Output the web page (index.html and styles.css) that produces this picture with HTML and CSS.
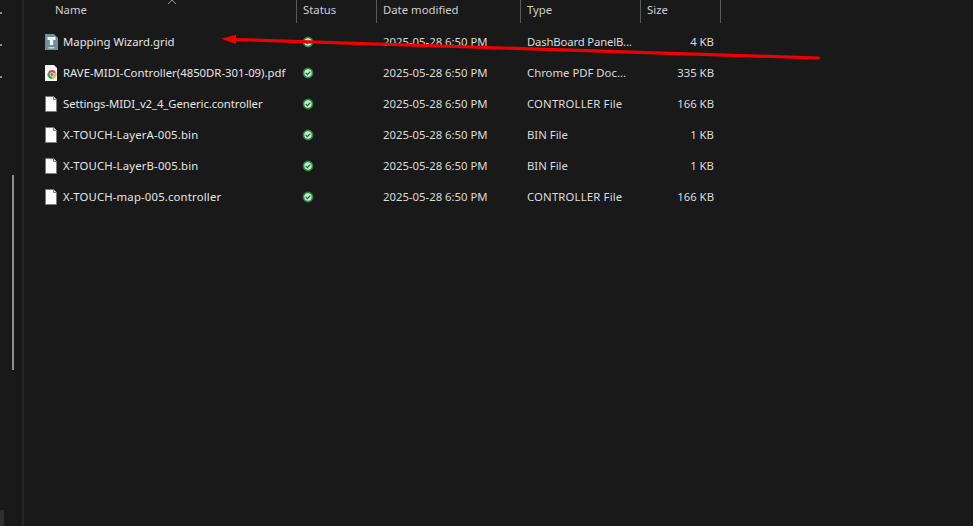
FILE: index.html
```html
<!DOCTYPE html>
<html lang="en">
<head>
<meta charset="utf-8">
<title>Explorer</title>
<link rel="stylesheet" href="styles.css">
</head>
<body>
<div class="window">
  <aside class="nav">
    <i class="tick"></i><i class="tick"></i><i class="tick"></i>
    <div class="thumb"></div>
    <div class="corner"></div>
  </aside>
  <main class="list">
    <svg class="chev" width="10" height="5" viewBox="0 0 10 5"><path d="M1 4 L5 0 L9 4" fill="none" stroke="#9a9a9a" stroke-width="1"/></svg>
    <div class="row head">
      <div class="c name">Name</div>
      <div class="c status">Status</div>
      <div class="c date">Date modified</div>
      <div class="c type">Type</div>
      <div class="c size">Size</div>
    </div>
    <div class="row item">
      <div class="c name"><svg class="ficon gridicon" width="13" height="16" viewBox="0 0 13 16"><path d="M0 0H9L13 4V16H0Z" fill="#6f9296"/><path d="M2.5 3H10.5V6H8.2V11H4.8V6H2.5Z" fill="#f2f5f5"/><rect x="3.5" y="13" width="6" height="1.5" fill="#c4d2d3"/></svg><span>Mapping Wizard.grid</span></div>
      <div class="c status"><svg class="ok" width="12" height="12" viewBox="0 0 12 12"><use href="#ok"/></svg></div>
      <div class="c date">2025-05-28 6:50 PM</div>
      <div class="c type"><span class="tight">DashBoard PanelB...</span></div>
      <div class="c size">4 KB</div>
    </div>
    <div class="row item">
      <div class="c name"><svg class="ficon" width="12" height="16" viewBox="0 0 12 16"><path d="M0 0H9L12 3V16H0Z" fill="#f7f7f7"/><path d="M7 9.5L3.1 7.25A4.5 4.5 0 0 1 10.9 7.25Z" fill="#dc4234"/><path d="M7 9.5L10.9 7.25A4.5 4.5 0 0 1 7 14Z" fill="#f0b82c"/><path d="M7 9.5L7 14A4.5 4.5 0 0 1 3.1 7.25Z" fill="#3a9f4f"/><circle cx="7" cy="9.5" r="2.2" fill="#fff"/><circle cx="7" cy="9.5" r="1.6" fill="#3f7fe0"/></svg><span>RAVE-MIDI-Controller(4850DR-301-09).pdf</span></div>
      <div class="c status"><svg class="ok" width="12" height="12" viewBox="0 0 12 12"><use href="#ok"/></svg></div>
      <div class="c date">2025-05-28 6:50 PM</div>
      <div class="c type"><span>Chrome PDF Doc...</span></div>
      <div class="c size">335 KB</div>
    </div>
    <div class="row item">
      <div class="c name"><svg class="ficon" width="12" height="16" viewBox="0 0 12 16"><use href="#doc"/></svg><span class="snug">Settings-MIDI_v2_4_Generic.controller</span></div>
      <div class="c status"><svg class="ok" width="12" height="12" viewBox="0 0 12 12"><use href="#ok"/></svg></div>
      <div class="c date">2025-05-28 6:50 PM</div>
      <div class="c type"><span class="wide">CONTROLLER File</span></div>
      <div class="c size">166 KB</div>
    </div>
    <div class="row item">
      <div class="c name"><svg class="ficon" width="12" height="16" viewBox="0 0 12 16"><use href="#doc"/></svg><span class="wide">X-TOUCH-LayerA-005.bin</span></div>
      <div class="c status"><svg class="ok" width="12" height="12" viewBox="0 0 12 12"><use href="#ok"/></svg></div>
      <div class="c date">2025-05-28 6:50 PM</div>
      <div class="c type"><span>BIN File</span></div>
      <div class="c size">1 KB</div>
    </div>
    <div class="row item">
      <div class="c name"><svg class="ficon" width="12" height="16" viewBox="0 0 12 16"><use href="#doc"/></svg><span class="wide">X-TOUCH-LayerB-005.bin</span></div>
      <div class="c status"><svg class="ok" width="12" height="12" viewBox="0 0 12 12"><use href="#ok"/></svg></div>
      <div class="c date">2025-05-28 6:50 PM</div>
      <div class="c type"><span>BIN File</span></div>
      <div class="c size">1 KB</div>
    </div>
    <div class="row item">
      <div class="c name"><svg class="ficon" width="12" height="16" viewBox="0 0 12 16"><use href="#doc"/></svg><span class="wide">X-TOUCH-map-005.controller</span></div>
      <div class="c status"><svg class="ok" width="12" height="12" viewBox="0 0 12 12"><use href="#ok"/></svg></div>
      <div class="c date">2025-05-28 6:50 PM</div>
      <div class="c type"><span class="wide">CONTROLLER File</span></div>
      <div class="c size">166 KB</div>
    </div>
  </main>
</div>
<svg class="arrow" width="973" height="526" viewBox="0 0 973 526"><path d="M818.5 58 L234 39.5" fill="none" stroke="#f00000" stroke-width="3.2" stroke-linecap="round"/><path d="M221 38.7 L236 34.7 L236 44 Z" fill="#f00000"/></svg>
<svg class="defs" width="0" height="0">
  <defs>
    <g id="ok"><circle cx="6" cy="6" r="5.4" fill="#1e8a3a"/><circle cx="6" cy="6" r="3.7" fill="#cfe6d3"/><path d="M3.8 6 L5.4 7.6 L8.3 4.6" fill="none" stroke="#1c6f30" stroke-width="1.3"/></g>
    <g id="doc"><path d="M.5 .5H8.5L11.5 3.5V15.5H.5Z" fill="#fbfbfb" stroke="#7a7a7a"/><path d="M8.5 .5V3.5H11.5" fill="#e8e8e8" stroke="#7a7a7a"/></g>
  </defs>
</svg>
</body>
</html>
```
FILE: styles.css
```css
html, body {
  margin: 0;
  height: 100%;
  background: #191919;
  overflow: hidden;
}
.window {
  display: flex;
  width: 973px;
  height: 526px;
  font: 11.33px "Noto Sans", "Open Sans", sans-serif;
  color: #dcdcdc;
}
.nav {
  position: relative;
  width: 22px;
  flex: none;
  border-right: 2px solid #262626;
}
.tick {
  position: absolute;
  left: 0;
  width: 2px;
  height: 2px;
  background: #8a8a8a;
}
.tick:nth-child(1) { top: 12px; }
.tick:nth-child(2) { top: 44px; }
.tick:nth-child(3) { top: 76px; }
.thumb {
  position: absolute;
  left: 12px;
  top: 175px;
  width: 2px;
  height: 195px;
  background: #8d8d8d;
}
.corner {
  position: absolute;
  left: 0;
  top: 510px;
  width: 4px;
  height: 16px;
  background: #2e2e2e;
}
.list {
  position: relative;
  flex: 1;
}
.chev {
  position: absolute;
  left: 143px;
  top: 0;
}
.row {
  display: grid;
  grid-template-columns: 273px 80px 144px 120px 80px;
  line-height: 16px;
}
.head {
  height: 23px;
  align-items: start;
  color: #d0d0d0;
}
.head .c {
  height: 23px;
  padding-top: 2px;
  box-sizing: border-box;
  border-right: 1px solid #5a5a5a;
}
.head .name { padding-left: 31px; }
.head .status, .head .date, .head .type { padding-left: 6px; }
.head .size { padding-left: 6px; }
.item {
  height: 31px;
  align-items: center;
}
.item:nth-of-type(2) { margin-top: 4px; }
.c { white-space: nowrap; }
.item .name {
  display: flex;
  align-items: center;
  gap: 6px;
  padding-left: 21px;
  color: #e6e6e6;
}
.ficon {
  flex: none;
  margin-bottom: 1px;
}
.gridicon { margin-right: -1px; }
.item .status {
  padding-left: 5px;
  display: flex;
}
.ok { margin-bottom: 1px; }
.item .name span,
.item .date,
.item .type,
.item .size { padding-bottom: 2px; }
.item .date, .item .type { padding-left: 6px; }
.item .size {
  text-align: right;
  padding-right: 7px;
}
.wide { letter-spacing: .17px; }
.snug { letter-spacing: -.08px; }
.tight { letter-spacing: -.17px; }
.arrow {
  position: absolute;
  left: 0;
  top: 0;
  pointer-events: none;
}
.defs { position: absolute; }
```
